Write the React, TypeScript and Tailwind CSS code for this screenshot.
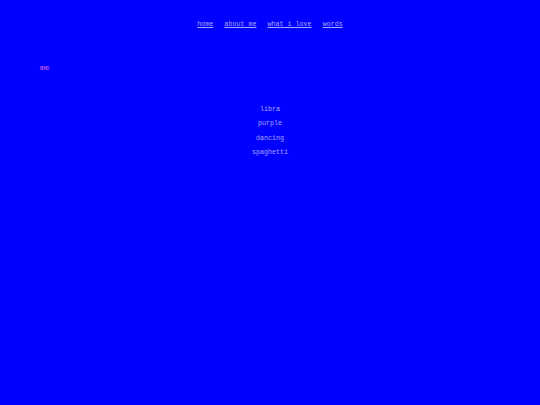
export default function App() {
  return (
    <div className="min-h-[405px] w-full bg-[#0000ff] font-['Liberation_Mono',monospace] text-[6.7px] leading-none text-[#a8a8ff]">
      <nav className="flex justify-center gap-[11px] pt-[21px]">
        <a href="#" className="underline text-[#a8a8ff]">home</a>
        <a href="#" className="underline text-[#a8a8ff]">about me</a>
        <a href="#" className="underline text-[#a8a8ff]">what i love</a>
        <a href="#" className="underline text-[#a8a8ff]">words</a>
      </nav>
      <h1 className="pl-[40px] pt-[36px] text-[8px] font-bold text-[#b850f8]">me</h1>
      <ul className="mt-[34px] flex flex-col items-center gap-[7.8px]">
        <li>libra</li>
        <li>purple</li>
        <li>dancing</li>
        <li>spaghetti</li>
      </ul>
    </div>
  );
}
